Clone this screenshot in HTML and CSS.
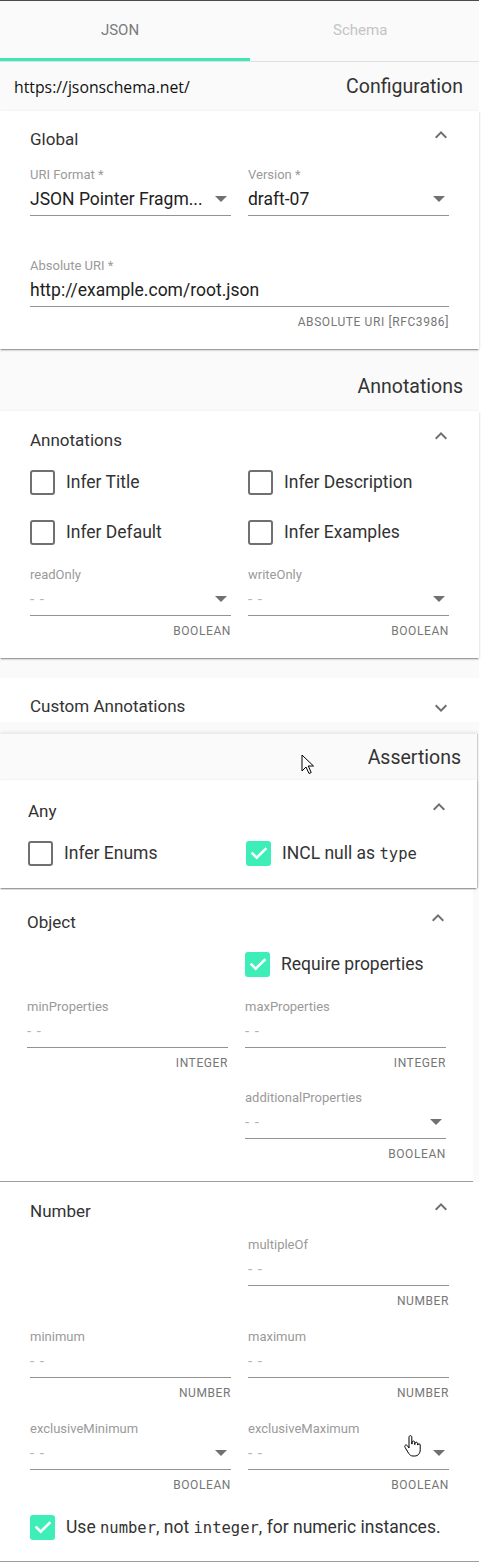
FILE: index.html
```html
<!DOCTYPE html>
<html lang="en">
<head>
<meta charset="utf-8">
<title>JSON Schema Tool</title>
<link rel="stylesheet" href="styles.css">
</head>
<body>
<div class="app">
  <nav class="tabs">
    <div class="tab tab-active">JSON</div>
    <div class="tab">Schema</div>
  </nav>

  <div class="band band-config">
    <span class="site">https://jsonschema.net/</span>
    <h2 class="band-title">Configuration</h2>
  </div>

  <section class="card card-global">
    <header class="card-head">
      <h3 class="card-title">Global</h3>
      <svg class="chev" viewBox="0 0 24 24" width="24" height="24"><path d="M12 8l-6 6 1.41 1.41L12 10.83l4.59 4.58L18 14z"/></svg>
    </header>
    <div class="fields fields-global">
      <div class="field">
        <div class="label">URI Format *</div>
        <div class="control"><span class="value">JSON Pointer Fragm...</span><span class="caret"></span></div>
        <div class="hint"></div>
      </div>
      <div class="field">
        <div class="label">Version *</div>
        <div class="control"><span class="value">draft-07</span><span class="caret"></span></div>
        <div class="hint"></div>
      </div>
      <div class="field field-wide">
        <div class="label">Absolute URI *</div>
        <div class="control"><span class="value">http://example.com/root.json</span></div>
        <div class="hint">ABSOLUTE URI [RFC3986]</div>
      </div>
    </div>
  </section>

  <div class="band band-annot">
    <h2 class="band-title">Annotations</h2>
  </div>

  <section class="card card-annot">
    <header class="card-head">
      <h3 class="card-title">Annotations</h3>
      <svg class="chev" viewBox="0 0 24 24" width="24" height="24"><path d="M12 8l-6 6 1.41 1.41L12 10.83l4.59 4.58L18 14z"/></svg>
    </header>
    <div class="checks">
      <label class="check"><span class="box"></span><span>Infer Title</span></label>
      <label class="check"><span class="box"></span><span>Infer Description</span></label>
      <label class="check"><span class="box"></span><span>Infer Default</span></label>
      <label class="check"><span class="box"></span><span>Infer Examples</span></label>
    </div>
    <div class="fields fields-after-checks">
      <div class="field">
        <div class="label">readOnly</div>
        <div class="control"><span class="placeholder">- -</span><span class="caret"></span></div>
        <div class="hint">BOOLEAN</div>
      </div>
      <div class="field">
        <div class="label">writeOnly</div>
        <div class="control"><span class="placeholder">- -</span><span class="caret"></span></div>
        <div class="hint">BOOLEAN</div>
      </div>
    </div>
  </section>

  <section class="card card-custom">
    <header class="card-head">
      <h3 class="card-title">Custom Annotations</h3>
      <svg class="chev chev-down" viewBox="0 0 24 24" width="24" height="24"><path d="M16.59 8.59L12 13.17 7.41 8.59 6 10l6 6 6-6z"/></svg>
    </header>
  </section>

  <div class="assert-wrap">
    <div class="band band-assert">
      <h2 class="band-title">Assertions</h2>
    </div>

    <section class="card card-any">
      <header class="card-head">
        <h3 class="card-title">Any</h3>
        <svg class="chev" viewBox="0 0 24 24" width="24" height="24"><path d="M12 8l-6 6 1.41 1.41L12 10.83l4.59 4.58L18 14z"/></svg>
      </header>
      <div class="checks">
        <label class="check"><span class="box"></span><span>Infer Enums</span></label>
        <label class="check"><span class="box box-on"><svg viewBox="0 0 24 24" width="24" height="24"><path d="M5.5 12.5l4.2 4.2L18.5 8"/></svg></span><span>INCL null as <code>type</code></span></label>
      </div>
    </section>
  </div>

  <section class="card card-object">
    <header class="card-head">
      <h3 class="card-title">Object</h3>
      <svg class="chev" viewBox="0 0 24 24" width="24" height="24"><path d="M12 8l-6 6 1.41 1.41L12 10.83l4.59 4.58L18 14z"/></svg>
    </header>
    <div class="checks checks-single">
      <label class="check check-right"><span class="box box-on"><svg viewBox="0 0 24 24" width="24" height="24"><path d="M5.5 12.5l4.2 4.2L18.5 8"/></svg></span><span>Require properties</span></label>
    </div>
    <div class="fields fields-object">
      <div class="field">
        <div class="label">minProperties</div>
        <div class="control"><span class="placeholder">- -</span></div>
        <div class="hint">INTEGER</div>
      </div>
      <div class="field">
        <div class="label">maxProperties</div>
        <div class="control"><span class="placeholder">- -</span></div>
        <div class="hint">INTEGER</div>
      </div>
      <div class="field field-right">
        <div class="label">additionalProperties</div>
        <div class="control"><span class="placeholder">- -</span><span class="caret"></span></div>
        <div class="hint">BOOLEAN</div>
      </div>
    </div>
  </section>

  <section class="card card-number">
    <header class="card-head">
      <h3 class="card-title">Number</h3>
      <svg class="chev" viewBox="0 0 24 24" width="24" height="24"><path d="M12 8l-6 6 1.41 1.41L12 10.83l4.59 4.58L18 14z"/></svg>
    </header>
    <div class="fields fields-number">
      <div class="field field-right">
        <div class="label">multipleOf</div>
        <div class="control"><span class="placeholder">- -</span></div>
        <div class="hint">NUMBER</div>
      </div>
      <div class="field">
        <div class="label">minimum</div>
        <div class="control"><span class="placeholder">- -</span></div>
        <div class="hint">NUMBER</div>
      </div>
      <div class="field">
        <div class="label">maximum</div>
        <div class="control"><span class="placeholder">- -</span></div>
        <div class="hint">NUMBER</div>
      </div>
      <div class="field">
        <div class="label">exclusiveMinimum</div>
        <div class="control"><span class="placeholder">- -</span><span class="caret"></span></div>
        <div class="hint">BOOLEAN</div>
      </div>
      <div class="field">
        <div class="label">exclusiveMaximum</div>
        <div class="control"><span class="placeholder">- -</span><span class="caret"></span></div>
        <div class="hint">BOOLEAN</div>
      </div>
    </div>
    <div class="checks checks-single checks-last">
      <label class="check check-full"><span class="box box-on"><svg viewBox="0 0 24 24" width="24" height="24"><path d="M5.5 12.5l4.2 4.2L18.5 8"/></svg></span><span>Use <code>number</code>, not <code>integer</code>, for numeric instances.</span></label>
    </div>
  </section>

  <svg class="cursor cursor-arrow" viewBox="0 0 13 20" width="13" height="20"><path d="M1 1v16l4-4 3 6.5 2.2-1L7.3 12H12.5z"/></svg>
  <svg class="cursor cursor-hand" viewBox="0 0 18 22" width="18" height="22"><path d="M6 2.2c0-.9.6-1.6 1.4-1.6s1.4.7 1.4 1.6V9h.3V7.4c0-.8.6-1.3 1.3-1.3s1.3.5 1.3 1.3V9.5h.3V8.5c0-.8.6-1.3 1.3-1.3s1.3.5 1.3 1.3V10h.2c0-.7.5-1.2 1.2-1.2s1.2.5 1.2 1.2v4.8c0 3.6-2.2 6.2-5.4 6.2H10c-2.1 0-3.3-1-4.3-2.6L2 12.3c-.5-.8-.3-1.7.4-2.1.7-.4 1.500-.1 2 .5L6 13z"/></svg>
</div>
</body>
</html>
```

FILE: styles.css
```css
* { box-sizing: border-box; }

html, body {
  margin: 0;
  padding: 0;
  background: #ffffff;
}

body {
  font-family: Roboto, "Liberation Sans", Arial, sans-serif;
  color: #212121;
}

.app {
  position: relative;
  width: 479px;
  background: #fafafa;
  border-top: 1px solid #4a4a4a;
}

/* Tabs */
.tabs {
  display: grid;
  grid-template-columns: 250px 229px;
  height: 61px;
  border-bottom: 1px solid #e0e0e0;
}

.tab {
  display: flex;
  align-items: center;
  justify-content: flex-start;
  font-size: 15px;
  color: #c4c4c4;
  padding-bottom: 2px;
  padding-left: 83px;
}

.tab-active {
  justify-content: center;
  padding-left: 0;
  padding-right: 10px;
  color: #7a7a7a;
  border-bottom: 3px solid #3de8b7;
  padding-bottom: 0;
}

/* Bands */
.band {
  display: flex;
  align-items: center;
  justify-content: space-between;
  padding: 0 16px 0 14px;
}

.band-config { height: 49px; }
.band-annot { height: 49px; margin-top: 13px; justify-content: flex-end; }
.band-assert { height: 46px; margin-top: 12px; justify-content: flex-end; padding-right: 16px; }

.site {
  font-family: "Open Sans", "Noto Sans", sans-serif;
  font-size: 15.8px;
  color: #111;
}

.band-title {
  margin: 0;
  font-size: 19.5px;
  font-weight: 400;
  color: #333;
}

/* Cards */
.card {
  background: #ffffff;
  padding: 16px 30px 20px 30px;
  box-shadow: 0 2px 1px -1px rgba(0,0,0,.25), 0 1px 2px rgba(0,0,0,.14), 0 1px 3px rgba(0,0,0,.10);
  position: relative;
}

.card-global { padding-bottom: 19px; }

.card-head {
  display: flex;
  align-items: flex-start;
  justify-content: space-between;
  height: 24px;
}

.card-title {
  margin: 0;
  font-size: 17px;
  line-height: 24px;
  font-weight: 400;
  color: #333;
}

.chev {
  fill: #6f6f6f;
  margin-top: -4px;
  margin-right: -4px;
}

.chev-down { margin-top: 2px; }

/* Field grids */
.fields {
  display: grid;
  grid-template-columns: 201px 201px;
  column-gap: 17px;
  row-gap: 20px;
}

.fields-global { margin-top: 16px; row-gap: 19px; }
.fields-after-checks { margin-top: 10px; }
.fields-object { margin-top: 10px; row-gap: 19px; }
.fields-number { margin-top: 14px; }

.field-wide { grid-column: 1 / span 2; }
.field-right { grid-column: 2; }

.label {
  font-size: 13px;
  line-height: 16px;
  height: 16px;
  color: #9a9a9a;
}

.control {
  display: flex;
  align-items: center;
  justify-content: space-between;
  height: 33px;
  border-bottom: 1px solid #939393;
  padding-bottom: 1px;
}

.value {
  font-size: 17.5px;
  color: #212121;
  white-space: nowrap;
}

.placeholder {
  font-size: 15px;
  color: #b3b3b3;
  letter-spacing: 1px;
}

.caret {
  width: 0;
  height: 0;
  border-left: 6px solid transparent;
  border-right: 6px solid transparent;
  border-top: 6px solid #707070;
  margin-right: 4px;
}

.hint {
  margin-top: 7px;
  height: 16px;
  line-height: 16px;
  font-size: 12px;
  letter-spacing: 0.6px;
  text-align: right;
  color: #767676;
}

/* Checkboxes */
.checks {
  display: grid;
  grid-template-columns: 218px 201px;
  grid-auto-rows: 50px;
  margin-top: 5px;
}

.check {
  display: flex;
  align-items: center;
  gap: 11px;
  font-size: 17.5px;
  color: #333;
}

.check-right { grid-column: 2; }
.check-full { grid-column: 1 / span 2; }

.box {
  flex: none;
  width: 25px;
  height: 25px;
  border: 2.5px solid #707070;
  border-radius: 3px;
}

.box-on {
  border: none;
  background: #3deeb9;
}

.box-on svg {
  display: block;
  fill: none;
  stroke: #ffffff;
  stroke-width: 2.6;
  stroke-linecap: square;
  margin: 0.5px;
}

code {
  font-family: "DejaVu Sans Mono", "Liberation Mono", monospace;
  font-size: 15.5px;
  color: #333;
}

/* Specific cards */
.card-annot { padding-top: 17px; padding-bottom: 19px; }

.card-custom {
  margin-top: 20px;
  height: 44px;
  overflow: hidden;
  box-shadow: none;
}

.assert-wrap {
  border-right: 1px solid #cfcfcf;
  width: 478px;
  box-shadow: 0 -2px 3px rgba(0,0,0,.08);
  position: relative;
}

.card-any {
  padding: 19px 30px 10px 28px;
}

.card-object {
  margin-top: 2px;
  width: 473px;
  padding: 20px 27px 19px 27px;
  box-shadow: none;
  border-bottom: 1px solid #9e9e9e;
}

.card-object .checks { margin-top: 5px; }

.card-number {
  padding: 17px 30px 9px 30px;
  box-shadow: none;
  border-bottom: 1px solid #9e9e9e;
}

.checks-last { margin-top: 9px; }

/* Pointer overlays */
.cursor {
  position: absolute;
  fill: #ffffff;
  stroke: #000000;
  stroke-width: 1;
  stroke-linejoin: round;
}

.cursor-arrow { left: 301px; top: 753px; }
.cursor-hand { left: 403px; top: 1434px; }
```
